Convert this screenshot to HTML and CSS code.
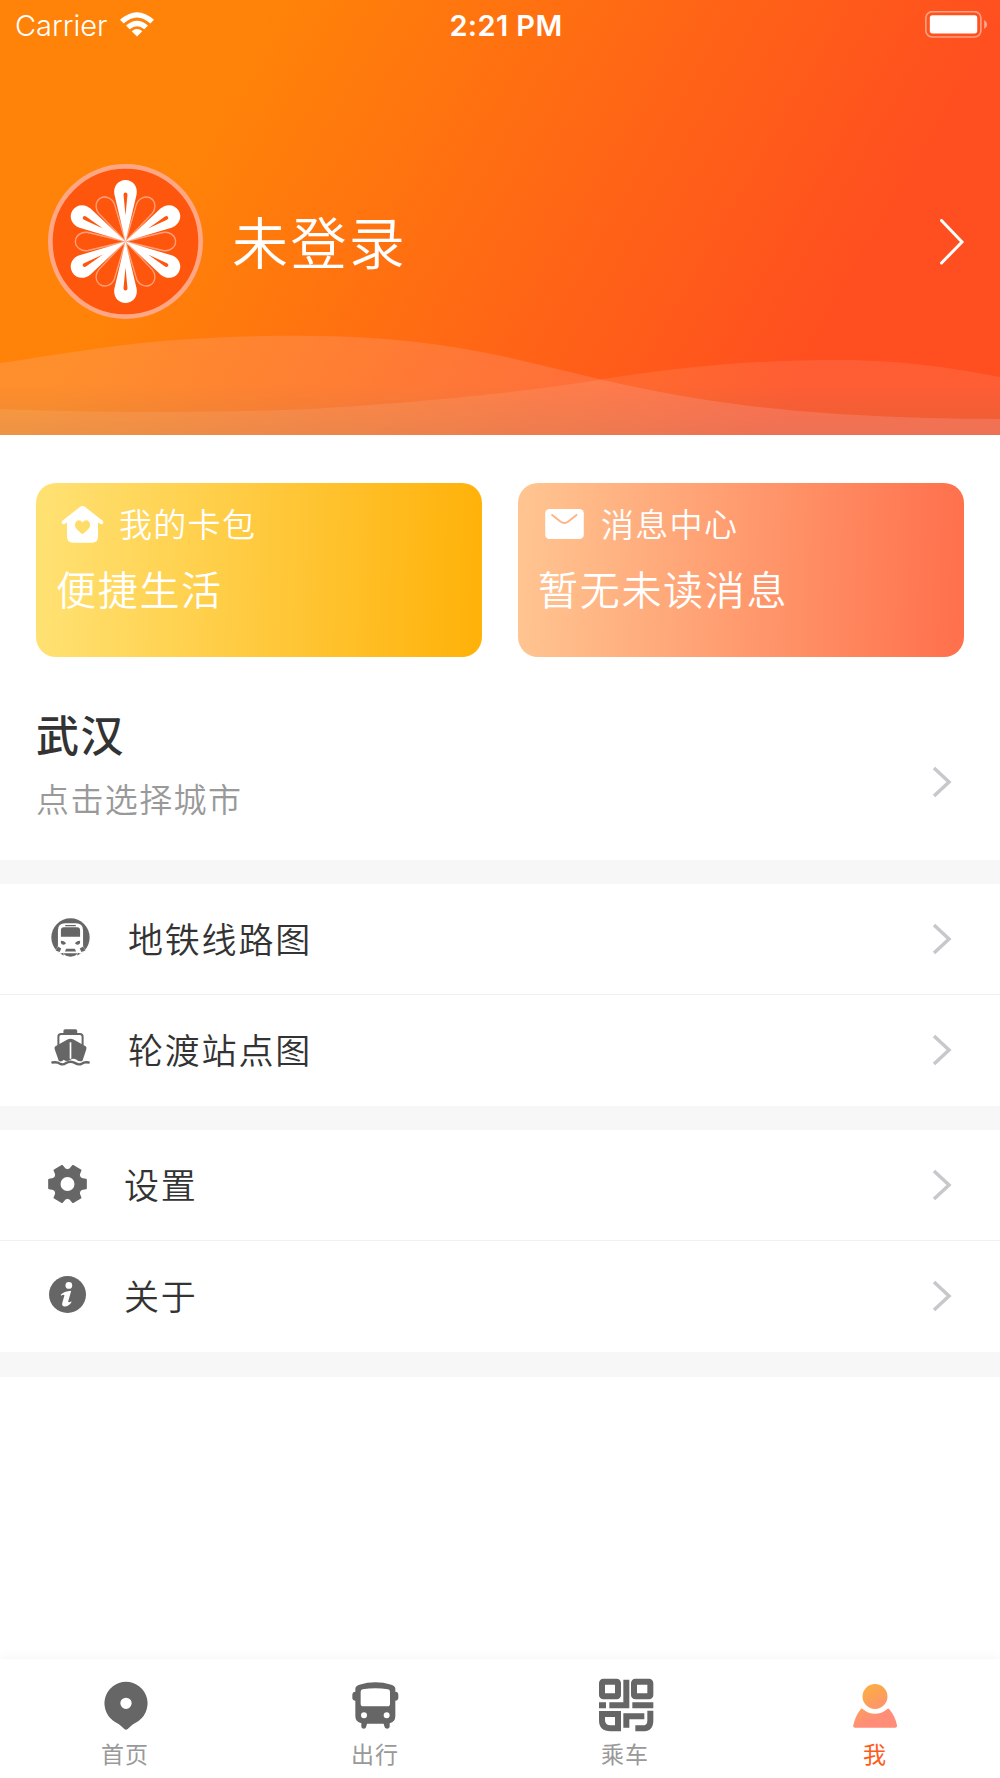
FILE: index.html
```html
<!DOCTYPE html>
<html lang="zh-CN">
<head>
  <meta charset="UTF-8">
  <title>我</title>
  <link rel="stylesheet" href="styles.css">
</head>
<body>

  <header class="hero">
    <div class="status-bar">
      <div class="carrier">
        <span>Carrier</span>
        <svg class="wifi" viewBox="0 0 102 74">
          <path d="M0 23 Q51 -23 102 23 L91 34 Q51 -2 11 34 Z"/>
          <path d="M18 40 Q51 12 84 40 L73 51 Q51 33 29 51 Z"/>
          <path d="M35 57 Q51 44 67 57 L51 73 Z"/>
        </svg>
      </div>
      <div class="time">2:21 PM</div>
      <svg class="battery" viewBox="0 0 190 82">
        <rect x="2" y="2" width="167" height="77" rx="19" fill="none" stroke="#fff" stroke-opacity=".45" stroke-width="5"/>
        <rect x="14" y="13" width="144" height="55" rx="8" fill="#fff"/>
        <path d="M179 27 Q188 32 188 41 Q188 50 179 55 Z" fill="#fff" fill-opacity=".5"/>
      </svg>
    </div>

    <div class="profile">
      <svg class="avatar" viewBox="-232 -232 464 464">
        <defs>
          <path id="petal" fill="#fff" fill-rule="evenodd" d="M0 0 L-16 -68 L-33 -140 C-38 -164 -22 -184 0 -184 C22 -184 38 -164 33 -140 L16 -68 Z M0 -78 L6 -140 A6 7 0 0 0 -6 -140 Z"/>
          <path id="outline" fill="none" stroke="#ffa17c" stroke-width="4" d="M0 0 L-27 -112 C-31 -132 -17 -150 0 -150 C17 -150 31 -132 27 -112 Z"/>
        </defs>
        <circle r="225" fill="#ff560d" stroke="#ffa785" stroke-width="14"/>
        <use href="#outline" transform="rotate(30)"/>
        <use href="#outline" transform="rotate(90)"/>
        <use href="#outline" transform="rotate(150)"/>
        <use href="#outline" transform="rotate(210)"/>
        <use href="#outline" transform="rotate(270)"/>
        <use href="#outline" transform="rotate(330)"/>
        <use href="#petal"/>
        <use href="#petal" transform="rotate(60)"/>
        <use href="#petal" transform="rotate(120)"/>
        <use href="#petal" transform="rotate(180)"/>
        <use href="#petal" transform="rotate(240)"/>
        <use href="#petal" transform="rotate(300)"/>
      </svg>
      <h1>未登录</h1>
      <svg class="hero-arrow" viewBox="0 0 24 46"><path d="M1.5 1.5 L22 23 L1.5 44"/></svg>
    </div>

    <svg class="waves" viewBox="0 335 1000 100">
      <path fill="#ffc0d0" fill-opacity=".18" d="M0 363 C90 350 150 335.700 300 335.700 C440 336 510 358 601 379.500 C700 402 800 418 1000 419 V435 H0 Z"/>
      <path fill="#fff" fill-opacity=".09" d="M0 409 C100 413 230 413 319 408.500 C440 401 530 391 601 379.500 C690 365 760 360 842 360 C900 360 960 369 1000 377 V435 H0 Z"/>
    </svg>
  </header>

  <section class="cards">
    <div class="card wallet">
      <div class="card-title">
        <svg class="house" viewBox="0 0 130 112">
          <path fill-rule="evenodd" d="M57 3 Q65 -3 73 3 L126 45 Q130 50 126 54 Q122 57 117 53 L112 50 V93 Q112 111 94 111 H37 Q18 111 18 93 V50 L13 53 Q8 57 4 54 Q0 50 4 45 Z M65 50 C55 37 42 45 42 58 C42 68 58 79 62 83 Q65 86 68 83 C72 79 88 68 88 58 C88 45 75 37 65 50 Z"/>
        </svg>
        <span>我的卡包</span>
      </div>
      <p>便捷生活</p>
    </div>
    <div class="card message">
      <div class="card-title">
        <svg class="mail" viewBox="0 0 117 91">
          <rect width="117" height="91" rx="13" fill="#fff"/>
          <path d="M21 18 L46 38 Q58 47 70 38 L95 18" fill="none" stroke="#ffb486" stroke-width="6" stroke-linecap="round"/>
        </svg>
        <span>消息中心</span>
      </div>
      <p>暂无未读消息</p>
    </div>
  </section>

  <section class="city">
    <div>
      <h2>武汉</h2>
      <p>点击选择城市</p>
    </div>
    <svg class="arrow" viewBox="0 0 20 32"><path d="M2 2 L17 16 L2 30"/></svg>
  </section>

  <ul class="menu">
    <li>
      <svg class="metro" viewBox="0 0 116 118">
        <circle cx="58" cy="59" r="58" fill="#666"/>
        <path fill="#fff" d="M20 37 Q20 16 42 16 H74 Q96 16 96 37 V85 L103 98 L89 108 L80 105 L77 118 H39 L36 105 L27 108 L13 98 L20 85 Z"/>
        <path fill="#666" d="M42 21 H74 V25 H42 Z M38 28 H78 Q87 28 87 38 V57 H29 V38 Q29 28 38 28 Z M29 69 Q43 70 44 78 Q33 84 29 76 Z M87 69 Q73 70 72 78 Q83 84 87 76 Z M45 93 H71 L75 101 H41 Z M37 107 H79 Q74 117 58 117 Q42 117 37 107 Z M20 86 L30 92 L25 103 L13 98 Z M96 86 L86 92 L91 103 L103 98 Z"/>
      </svg>
      <span>地铁线路图</span>
      <svg class="arrow" viewBox="0 0 20 32"><path d="M2 2 L17 16 L2 30"/></svg>
    </li>
    <li>
      <svg class="ship" viewBox="0 0 116 109">
        <path fill="#666" d="M37 12 V5 Q37 0 42 0 H73 Q78 0 78 5 V12 Z"/>
        <path fill="none" stroke="#666" stroke-width="6" d="M22 48 V22 Q22 14 30 14 H86 Q94 14 94 22 V48"/>
        <path fill="#666" d="M13 51 L49 31 Q58 26 67 31 L103 51 Q107 54 105 60 L94 93 Q86 99 76 91 Q66 85 58 91 Q46 99 38 91 Q30 99 23 94 L11 60 Q9 54 13 51 Z"/>
        <path stroke="#fff" stroke-width="5" d="M58 39 V88"/>
        <path fill="none" stroke="#666" stroke-width="7" stroke-linecap="round" d="M4 99 Q20 97 27 103 Q37 107 44 101 Q58 93 72 101 Q82 107 91 103 Q98 97 112 99"/>
      </svg>
      <span>轮渡站点图</span>
      <svg class="arrow" viewBox="0 0 20 32"><path d="M2 2 L17 16 L2 30"/></svg>
    </li>
  </ul>

  <ul class="menu settings">
    <li>
      <svg class="gear" viewBox="-58 -57 116 114">
        <g fill="#666">
          <circle r="42"/>
          <path id="tooth" d="M-58 -13 Q-58 -16 -55 -16 L-43 -18 L-36 -24 V24 L-43 18 L-55 16 Q-58 16 -58 13 Z M58 -13 Q58 -16 55 -16 L43 -18 L36 -24 V24 L43 18 L55 16 Q58 16 58 13 Z"/>
          <use href="#tooth" transform="rotate(60)"/>
          <use href="#tooth" transform="rotate(120)"/>
        </g>
        <circle r="21" fill="#fff"/>
      </svg>
      <span>设置</span>
      <svg class="arrow" viewBox="0 0 20 32"><path d="M2 2 L17 16 L2 30"/></svg>
    </li>
    <li>
      <svg class="info" viewBox="0 0 110 110">
        <circle cx="55" cy="55" r="55" fill="#666"/>
        <circle cx="59" cy="28" r="10" fill="#fff"/>
        <path fill="#fff" d="M35 56 Q44 45 66 44 L57 76 Q58 81 67 75 Q67 80 62 84 Q52 93 43 90 Q37 87 40 78 L46 57 Q43 53 36 59 Z"/>
      </svg>
      <span>关于</span>
      <svg class="arrow" viewBox="0 0 20 32"><path d="M2 2 L17 16 L2 30"/></svg>
    </li>
  </ul>

  <nav class="tabbar">
    <div class="tab">
      <svg viewBox="0 0 168 168">
        <path fill="#666" fill-rule="evenodd" d="M84 11 A65 65 0 0 1 113 134 Q105 138 98 145 L89 153 Q84 157 79 153 L70 145 Q63 138 55 134 A65 65 0 0 1 84 11 Z M84 59 A17 17 0 1 0 84 93 A17 17 0 1 0 84 59 Z"/>
      </svg>
      <span>首页</span>
    </div>
    <div class="tab">
      <svg viewBox="2 0 168 168">
        <path fill="#666" fill-rule="evenodd" d="M36 20 Q84 6 132 20 Q144 24 144 32 V41 Q153 41 153 51 V59 Q153 67 144 68 V115 Q144 131 127 136 V145 Q127 152 119 152 Q112 152 111 145 L109 137 H59 L57 145 Q56 152 50 152 Q42 152 42 145 V136 Q24 131 24 115 V68 Q15 67 15 59 V51 Q15 41 24 41 V32 Q24 24 36 20 Z M46 34 Q40 35 40 41 V77 Q40 85 48 85 H120 Q128 85 128 77 V41 Q128 35 122 34 Q84 28 46 34 Z M50 103 A9 9 0 1 0 50 121 A9 9 0 1 0 50 103 Z M118 103 A9 9 0 1 0 118 121 A9 9 0 1 0 118 103 Z"/>
      </svg>
      <span>出行</span>
    </div>
    <div class="tab">
      <svg viewBox="0 0 168 168">
        <g fill="none" stroke="#666" stroke-width="18">
          <rect x="12" y="11" width="48" height="44" rx="4"/>
          <rect x="108" y="11" width="49" height="44" rx="4"/>
          <path d="M85 5 V82 M34 82 H94 M3 82 H24 M103 82 H166"/>
          <path d="M12 108 H60 V151 H38 Q12 151 12 127 Z"/>
          <path d="M85 149 V115 H139 M157 98 V128 Q157 151 134 151 H112"/>
        </g>
      </svg>
      <span>乘车</span>
    </div>
    <div class="tab active">
      <svg viewBox="0 0 168 168">
        <defs>
          <linearGradient id="me" gradientUnits="userSpaceOnUse" x1="50" y1="20" x2="112" y2="140">
            <stop offset="0" stop-color="#fbb03f"/>
            <stop offset=".8" stop-color="#ff8d78"/>
          </linearGradient>
        </defs>
        <path fill="url(#me)" d="M84 18 A37.500 37.500 0 1 1 84 93 A37.500 37.500 0 1 1 84 18 Z M46 92 Q84 123 122 92 Q125 91 127 94 Q144 114 150 142 Q151 149 144 149 H25 Q17 149 19 142 Q25 114 41 94 Q43 91 46 92 Z"/>
      </svg>
      <span>我</span>
    </div>
  </nav>

</body>
</html>
```

FILE: styles.css
```css
* { box-sizing: border-box; margin: 0; padding: 0; }

body {
  height: 1778px;
  display: flex;
  flex-direction: column;
  font-family: "Noto Sans CJK SC", sans-serif;
  font-weight: 350;
  color: #333;
  background: white;
  overflow: hidden;
}

svg {
  display: block;
  flex-shrink: 0;
}

ul { list-style: none; }

/* Header */
.hero {
  position: relative;
  height: 435px;
  color: white;
  background: linear-gradient(120deg, #ff8308 22%, #ff4e20 82%);
}

.status-bar {
  display: grid;
  grid-template-columns: 1fr auto 1fr;
  align-items: center;
  height: 50px;
  padding: 0 12px 0 15px;
  font-family: Inter, sans-serif;
  font-size: 29px;
  font-weight: 350;
}

.carrier {
  display: flex;
  align-items: center;
  gap: 13px;
}

.wifi {
  width: 34px;
  height: 25px;
  margin-bottom: 2px;
  fill: white;
}

.time {
  font-weight: 600;
  letter-spacing: 0.4px;
  padding-left: 9px;
}

.battery {
  width: 63px;
  height: 27px;
  margin-bottom: 1px;
  justify-self: end;
}

.profile {
  display: flex;
  align-items: center;
  height: 155px;
  margin-top: 114px;
  padding: 0 35px 0 48px;
}

.avatar {
  width: 155px;
  height: 155px;
}

.profile h1 {
  flex: 1;
  margin: -4px 0 0 29px;
  font-size: 56px;
  font-weight: 350;
  letter-spacing: 2.4px;
}

.hero-arrow {
  width: 26px;
  height: 46px;
  fill: none;
  stroke: white;
  stroke-width: 3;
  stroke-linecap: round;
}

.waves {
  position: absolute;
  left: 0;
  bottom: 0;
  width: 1000px;
  height: 100px;
  background: linear-gradient(to bottom, rgba(90, 90, 60, 0) 50%, rgba(90, 90, 60, 0.14));
}

/* Cards */
.cards {
  display: grid;
  grid-template-columns: 1fr 1fr;
  gap: 36px;
  padding: 48px 36px 0;
}

.card {
  height: 174px;
  padding: 16px 20px;
  border-radius: 20px;
  color: white;
}

.wallet { background: linear-gradient(92deg, #ffe172 2%, #ffb20a 98%); }
.message { background: linear-gradient(92deg, #ffc490 2%, #ff714d 98%); }

.card-title {
  display: flex;
  align-items: center;
  height: 50px;
  font-size: 33px;
  letter-spacing: 1.3px;
}

.card-title span { margin-top: -3px; }

.house {
  width: 43px;
  height: 37px;
  margin: 0 15px 0 5px;
  fill: white;
}

.mail {
  width: 39px;
  height: 30px;
  margin: 0 17px 0 7px;
}

.card p {
  height: 60px;
  line-height: 60px;
  margin-top: 9px;
  font-size: 40px;
  letter-spacing: 1.7px;
}

/* City */
.city {
  display: flex;
  justify-content: space-between;
  align-items: center;
  height: 203px;
  padding: 46px 48px 0 36px;
}

.city > div {
  height: 163px;
}

.city h2 {
  line-height: 66px;
  font-size: 43px;
  font-weight: 500;
  letter-spacing: 1.5px;
}

.city p {
  line-height: 50px;
  margin-top: 7px;
  font-size: 33px;
  letter-spacing: 1.4px;
  color: #999;
}

.arrow {
  width: 20px;
  height: 32px;
  fill: none;
  stroke: #c7c7cc;
  stroke-width: 3.5;
}

/* Menu */
.menu {
  border-top: 24px solid #f7f7f7;
}

.menu li {
  display: flex;
  align-items: center;
  height: 111px;
  padding: 0 48px 2px 51px;
  font-size: 35px;
  letter-spacing: 1.8px;
}

.menu li:first-child {
  padding-bottom: 0;
  border-bottom: 1px solid #f0f0f0;
}

.menu span {
  flex: 1;
  margin: -3px 0 0 38px;
}

.metro { width: 39px; height: 39px; margin-top: -3px; }
.ship { width: 39px; height: 37px; margin-top: -5px; }

.settings {
  border-bottom: 25px solid #f7f7f7;
}

.settings li { padding-left: 48px; }
.settings span { margin-left: 37px; }

.gear { width: 39px; height: 38px; margin-top: -3px; }
.info { width: 39px; height: 37px; margin-top: -3px; }

/* Bottom tabs */
.tabbar {
  display: flex;
  height: 119px;
  margin-top: auto;
  background: white;
  box-shadow: 0 -2px 10px rgba(0, 0, 0, 0.04);
}

.tab {
  flex: 1;
  display: flex;
  flex-direction: column;
  align-items: center;
  padding-top: 19px;
  font-size: 23px;
  font-weight: 400;
  letter-spacing: 1px;
  color: #999;
}

.tab svg {
  width: 56px;
  height: 56px;
  margin-left: 2px;
}

.tab span {
  line-height: 36px;
  margin-top: 1px;
}

.tab.active { color: #ff5a1c; }

.tab.active svg { margin-left: 0; }
```
